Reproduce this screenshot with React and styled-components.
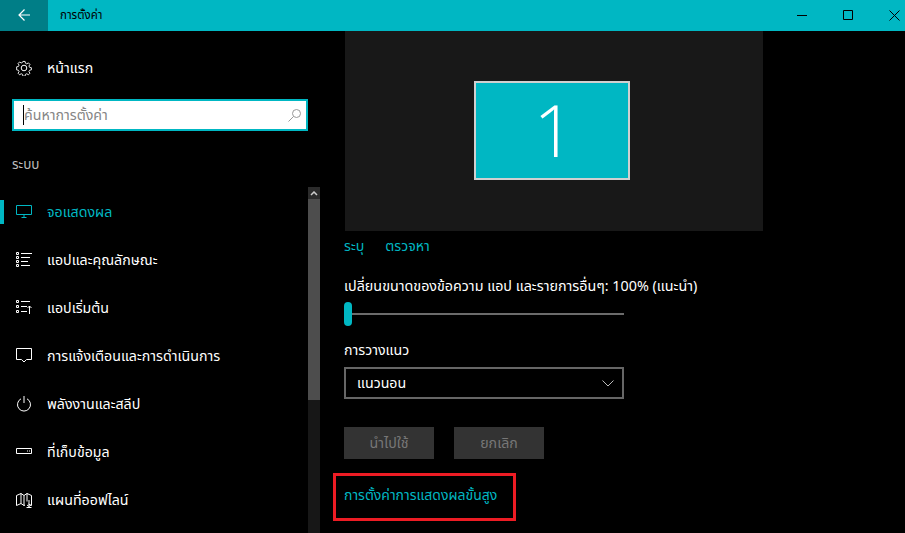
import styled, { createGlobalStyle } from "styled-components";

const FONT = `"Noto Sans Thai", "Noto Sans", "Liberation Sans", "DejaVu Sans", sans-serif`;
const ACCENT = "#00b7c3";

const NAV_ITEMS = [
  { label: "จอแสดงผล", icon: "display", active: true },
  { label: "แอปและคุณลักษณะ", icon: "apps" },
  { label: "แอปเริ่มต้น", icon: "defaults" },
  { label: "การแจ้งเตือนและการดำเนินการ", icon: "notify" },
  { label: "พลังงานและสลีป", icon: "power" },
  { label: "ที่เก็บข้อมูล", icon: "storage" },
  { label: "แผนที่ออฟไลน์", icon: "map" },
];

function Icon({ name }) {
  const paths = {
    gear: (
      <>
        <circle cx="8" cy="8" r="2.8" />
        <path d="M6.800.7h2.400l.4 2 1.500.7 1.800-1.100 1.700 1.700-1.100 1.800.7 1.500 2 .4v2.400l-2 .4-.7 1.500 1.100 1.800-1.700 1.700-1.800-1.100-1.500.7-.4 2H6.800l-.4-2-1.500-.7-1.800 1.100-1.700-1.700 1.100-1.800-.7-1.500-2-.4V6.700l2-.4.7-1.500L1.400 3l1.700-1.700 1.800 1.100 1.500-.7z" transform="translate(.8 .8) scale(.9)" />
      </>
    ),
    display: <path d="M.5 1.500h15v9H.5zM8 10.500v3M5.500 13.500h5" />,
    apps: (
      <path d="M.5.5h2v2h-2zM.5 4.500h2v2h-2zM.5 8.500h2v2h-2zM.5 12.500h2v2h-2zM5 1.500h11M5 5.500h9M5 9.500h7M5 13.500h9" />
    ),
    defaults: (
      <path d="M.5.5h2v2h-2zM.5 5.500h2v2h-2zM.5 10.500h2v2h-2zM5 1.500h9M5 6.500h6M5 11.500h6M13.500 6v8M11.500 8l2-2 2 2" />
    ),
    notify: <path d="M.5.5h15v11h-5L8 14l-2.500-2.500h-5z" />,
    power: <path d="M8 0v7M5 2.800a6.500 6.500 0 1 0 6 0" />,
    storage: <path d="M.5 4.500h15v5H.5zM11 7h1M13 7h1" />,
    map: (
      <path d="M.5 3.500 5 1.500l3 2 3-2 4.500 2v10l-3-1.500M.5 3.500v10l4.500-2 3 2 1-.5M5 1.500v10M8 3.500v10M11 1.500v8M13 8v6.500M11 13l2 1.500 2-1.500M10.500 15.500h5" />
    ),
  };
  return (
    <svg width="16" height="16" viewBox="0 0 16 16" fill="none" stroke="currentColor" strokeWidth="1">
      {paths[name]}
    </svg>
  );
}

function App() {
  return (
    <>
      <GlobalStyle />
      <Window>
        <TitleBar>
          <BackButton>
            <svg width="12" height="12" viewBox="0 0 12 12" fill="none" stroke="#fff" strokeWidth="1.2">
              <path d="M12 6H1M6.500.5 1 6l5.500 5.500" />
            </svg>
          </BackButton>
          <AppTitle>การตั้งค่า</AppTitle>
          <WindowButtons>
            <WindowButton>
              <svg width="11" height="11" viewBox="0 0 11 11" stroke="#000" fill="none">
                <path d="M0 5.500h10" />
              </svg>
            </WindowButton>
            <WindowButton>
              <svg width="11" height="11" viewBox="0 0 11 11" stroke="#000" fill="none">
                <path d="M.5.5h9v9h-9z" />
              </svg>
            </WindowButton>
            <WindowButton>
              <svg width="11" height="11" viewBox="0 0 11 11" stroke="#000" fill="none">
                <path d="m.5.5 10 10M10.500.5l-10 10" />
              </svg>
            </WindowButton>
          </WindowButtons>
        </TitleBar>
        <Body>
          <Sidebar>
            <HomeRow>
              <Icon name="gear" />
              <span>หน้าแรก</span>
            </HomeRow>
            <SearchBox>
              <Caret />
              <Placeholder>ค้นหาการตั้งค่า</Placeholder>
              <svg width="13" height="13" viewBox="0 0 13 13" fill="none" stroke="#999">
                <circle cx="8.500" cy="4.500" r="4" />
                <path d="M5.500 7.500l-5 5" />
              </svg>
            </SearchBox>
            <SectionLabel>ระบบ</SectionLabel>
            <NavArea>
              <NavList>
                {NAV_ITEMS.map((item) => (
                  <NavRow key={item.label} $active={item.active}>
                    <Icon name={item.icon} />
                    <span>{item.label}</span>
                  </NavRow>
                ))}
              </NavList>
              <ScrollBar>
                <ScrollArrow>
                  <svg width="8" height="5" viewBox="0 0 8 5" fill="none" stroke="#ccc" strokeWidth="1.500">
                    <path d="m1 4 3-3 3 3" />
                  </svg>
                </ScrollArrow>
                <ScrollThumb />
              </ScrollBar>
            </NavArea>
          </Sidebar>
          <Main>
            <Preview>
              <Monitor>1</Monitor>
            </Preview>
            <LinkRow>
              <TealLink>ระบุ</TealLink>
              <TealLink>ตรวจหา</TealLink>
            </LinkRow>
            <FieldLabel>เปลี่ยนขนาดของข้อความ แอป และรายการอื่นๆ: 100% (แนะนำ)</FieldLabel>
            <Slider>
              <SliderThumb />
            </Slider>
            <OrientLabel>การวางแนว</OrientLabel>
            <Select>
              <span>แนวนอน</span>
              <svg width="12" height="7" viewBox="0 0 12 7" fill="none" stroke="#bbb">
                <path d="m.5.5 5.500 5.500L11.500.5" />
              </svg>
            </Select>
            <Buttons>
              <DisabledButton>นำไปใช้</DisabledButton>
              <DisabledButton>ยกเลิก</DisabledButton>
            </Buttons>
            <Highlight>
              <HighlightLink>การตั้งค่าการแสดงผลขั้นสูง</HighlightLink>
            </Highlight>
          </Main>
        </Body>
      </Window>
    </>
  );
}

const GlobalStyle = createGlobalStyle`
  html, body { margin: 0; background: #000; }
  body { font-family: ${FONT}; font-size: 14.2px; color: #fff; overflow: hidden; }
  * { box-sizing: border-box; }
`;

const Window = styled.div`
  width: 905px;
  height: 533px;
  display: flex;
  flex-direction: column;
  overflow: hidden;
`;

const TitleBar = styled.header`
  height: 31px;
  flex: none;
  display: flex;
  align-items: center;
  background: ${ACCENT};
`;

const BackButton = styled.div`
  width: 48px;
  height: 31px;
  padding-bottom: 2px;
  display: flex;
  align-items: center;
  justify-content: center;
  background: #007e87;
`;

const AppTitle = styled.div`
  margin-left: 12px;
  font-size: 11.5px;
  color: #000;
`;

const WindowButtons = styled.div`
  margin-left: auto;
  margin-right: -12px;
  display: flex;
`;

const WindowButton = styled.div`
  width: 46px;
  height: 31px;
  display: flex;
  align-items: center;
  justify-content: center;
`;

const Body = styled.div`
  flex: 1;
  display: flex;
  min-height: 0;
`;

const Sidebar = styled.aside`
  width: 320px;
  flex: none;
  display: flex;
  flex-direction: column;
`;

const HomeRow = styled.div`
  height: 48px;
  margin-top: 13px;
  padding-left: 16px;
  display: flex;
  align-items: center;
  gap: 15px;
`;

const SearchBox = styled.div`
  width: 296px;
  height: 32px;
  margin: 7px 0 0 12px;
  padding: 0 5px 0 9px;
  display: flex;
  align-items: center;
  background: #fff;
  border: 2px solid ${ACCENT};
`;

const Caret = styled.div`
  width: 1px;
  height: 20px;
  background: #000;
`;

const Placeholder = styled.span`
  flex: 1;
  color: #858585;
`;

const SectionLabel = styled.div`
  height: 20px;
  margin: 24px 0 0 12px;
  line-height: 20px;
  font-size: 13.5px;
  color: #bbb;
`;

const NavArea = styled.div`
  flex: 1;
  min-height: 0;
  margin-top: 12px;
  display: flex;
`;

const NavList = styled.nav`
  flex: 1;
  padding-top: 1px;
`;

const NavRow = styled.div`
  position: relative;
  height: 48px;
  padding-left: 16px;
  display: flex;
  align-items: center;
  gap: 15px;
  color: ${(props) => (props.$active ? ACCENT : "#fff")};

  &::before {
    content: "";
    display: ${(props) => (props.$active ? "block" : "none")};
    position: absolute;
    left: 0;
    top: 12px;
    width: 4px;
    height: 24px;
    background: ${ACCENT};
  }
`;

const ScrollBar = styled.div`
  width: 12px;
  background: #171717;
  display: flex;
  flex-direction: column;
`;

const ScrollArrow = styled.div`
  height: 12px;
  display: flex;
  align-items: center;
  justify-content: center;
  background: #2b2b2b;
`;

const ScrollThumb = styled.div`
  height: 201px;
  background: #4d4d4d;
`;

const Main = styled.main`
  flex: 1;
  padding-left: 24px;
  display: flex;
  flex-direction: column;
  align-items: flex-start;
`;

const Preview = styled.div`
  width: 418px;
  height: 200px;
  margin-left: 1px;
  padding: 0 4px 1px 0;
  display: flex;
  align-items: center;
  justify-content: center;
  background: #181818;
`;

const Monitor = styled.div`
  width: 156px;
  height: 99px;
  padding: 0 0 3px 4px;
  display: flex;
  align-items: center;
  justify-content: center;
  background: ${ACCENT};
  border: 2px solid #d0d0d0;
  font-family: "Open Sans", "Liberation Sans", sans-serif;
  font-weight: 300;
  font-size: 72px;
`;

const LinkRow = styled.div`
  height: 20px;
  margin-top: 6px;
  display: flex;
  gap: 21px;
  line-height: 20px;
`;

const TealLink = styled.span`
  color: ${ACCENT};
`;

const HighlightLink = styled(TealLink)`
  font-size: 14px;
`;

const FieldLabel = styled.div`
  height: 20px;
  margin-top: 20px;
  line-height: 20px;
  font-size: 14.3px;
  white-space: nowrap;
`;

const Slider = styled.div`
  position: relative;
  width: 280px;
  height: 2px;
  margin-top: 16px;
  background: #6b6b6b;
`;

const SliderThumb = styled.div`
  position: absolute;
  left: 0;
  top: -11px;
  width: 8px;
  height: 24px;
  border-radius: 4px;
  background: ${ACCENT};
`;

const OrientLabel = styled.div`
  height: 20px;
  margin-top: 26px;
  line-height: 20px;
`;

const Select = styled.div`
  width: 280px;
  height: 32px;
  margin-top: 6px;
  padding: 0 8px 0 11px;
  display: flex;
  align-items: center;
  justify-content: space-between;
  border: 2px solid #666;
`;

const Buttons = styled.div`
  display: flex;
  gap: 20px;
  margin-top: 28px;
`;

const DisabledButton = styled.div`
  width: 90px;
  height: 32px;
  display: flex;
  align-items: center;
  justify-content: center;
  background: #333;
  color: #777;
`;

const Highlight = styled.div`
  width: 183px;
  height: 48px;
  margin: 14px 0 0 -11px;
  padding: 9px 0 0 8px;
  border: 3px solid #ed1c24;
  white-space: nowrap;
`;

export default App;
